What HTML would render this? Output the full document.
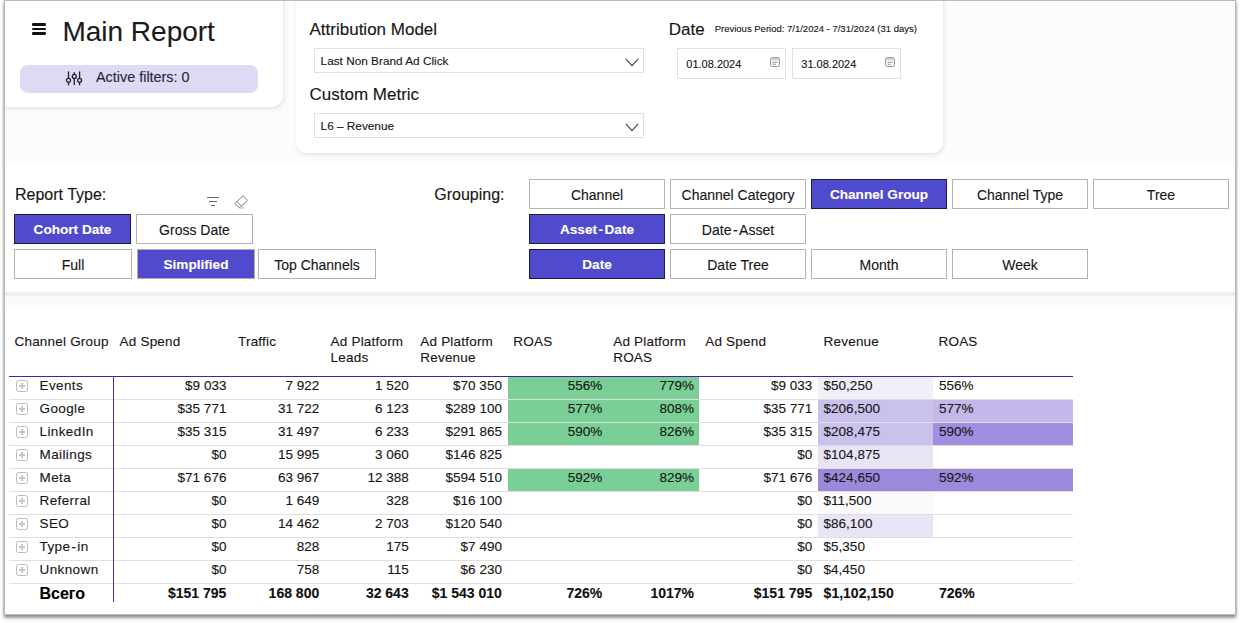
<!DOCTYPE html>
<html><head><meta charset="utf-8">
<style>
*{box-sizing:border-box}
html,body{margin:0;padding:0}
body{width:1240px;height:623px;background:#fff;overflow:hidden;position:relative;font-family:"Liberation Sans",sans-serif;color:#161616}
.a{position:absolute}
.t{position:absolute;white-space:nowrap;line-height:0;-webkit-text-stroke:.12px currentColor}
#page{position:absolute;left:4px;top:0;width:1232px;height:615px;background:#fff;border:1px solid #b9b9b9;box-shadow:0 0 3px rgba(0,0,0,.2),0 3px 3px rgba(0,0,0,.4)}
#clip{position:absolute;left:5px;top:1px;width:1230px;height:613px;overflow:hidden}
#in{position:absolute;left:-5px;top:-1px;width:1240px;height:623px}
.card{position:absolute;background:#fff;border-radius:11px;box-shadow:1px 2px 4px rgba(0,0,0,.10)}
.pill{position:absolute;background:#dcdbf3;border-radius:8px}
.btn{position:absolute;border:1px solid #b3b3b3;background:#fff;color:#161616;text-align:center}
.btn>span{position:absolute;left:0;right:0;line-height:0;white-space:nowrap;-webkit-text-stroke:.12px currentColor}
.on{background:#4f4bcc;border-color:#1e1e3c;color:#fff;font-weight:bold}
.exp{width:12px;height:12px;border:1px solid #bdbdbd;border-radius:2.5px}
.exp:before{content:"";position:absolute;left:2.1px;top:4.1px;width:5.7px;height:1.5px;background:#c8c8c8}
.exp:after{content:"";position:absolute;left:4.2px;top:2.1px;width:1.5px;height:5.5px;background:#c8c8c8}
</style></head><body>
<div id="page"></div>
<div id="clip"><div id="in">
<div class="a" style="left:0px;top:0px;width:1240px;height:165px;background:#fcfcfc"></div>
<div class="card" style="left:-20px;top:-20px;width:303px;height:127px"></div>
<div class="card" style="left:296px;top:-20px;width:647px;height:173px"></div>
<div class="a" style="left:31.5px;top:23.3px;width:14.8px;height:2.3px;background:#111;border-radius:1.2px"></div>
<div class="a" style="left:31.5px;top:27.9px;width:14.8px;height:2.3px;background:#111;border-radius:1.2px"></div>
<div class="a" style="left:31.5px;top:32.4px;width:14.8px;height:2.3px;background:#111;border-radius:1.2px"></div>
<div class="t" style="top:31.90px;font-size:28px;left:62.40px;color:#1b1b1b;">Main Report</div>
<div class="pill" style="left:20px;top:65px;width:238px;height:28px"></div>
<svg class="a" style="left:65px;top:71px" width="18" height="15" viewBox="0 0 18 15" fill="none" stroke="#1e1e30" stroke-width="1.3">
<line x1="3.5" y1="0.4" x2="3.5" y2="14.3"/><line x1="9.3" y1="1.2" x2="9.3" y2="14"/><line x1="14.6" y1="0.4" x2="14.6" y2="14.3"/>
<circle cx="3.5" cy="9.3" r="2" fill="#dcdbf3"/><circle cx="9.3" cy="5.4" r="2" fill="#dcdbf3"/><circle cx="14.6" cy="9.3" r="2" fill="#dcdbf3"/></svg>
<div class="t" style="top:77.01px;font-size:14.4px;left:96.00px;color:#252540;">Active filters: 0</div>
<div class="t" style="top:30.31px;font-size:17px;left:309.50px;">Attribution Model</div>
<div class="a" style="left:314px;top:48px;width:330px;height:25px;border:1px solid #e1e1e1;background:#fff"></div>
<div class="t" style="top:60.91px;font-size:11.8px;left:320.60px;">Last Non Brand Ad Click</div>
<svg class="a" style="left:624.5px;top:58.3px" width="14" height="9" viewBox="0 0 14 9" fill="none" stroke="#444" stroke-width="1.1"><polyline points="0.8,0.8 7,7.6 13.2,0.8"/></svg>
<div class="t" style="top:94.91px;font-size:17px;left:309.50px;">Custom Metric</div>
<div class="a" style="left:314px;top:113px;width:330px;height:25px;border:1px solid #e1e1e1;background:#fff"></div>
<div class="t" style="top:125.91px;font-size:11.8px;left:320.60px;">L6 – Revenue</div>
<svg class="a" style="left:624.5px;top:123.3px" width="14" height="9" viewBox="0 0 14 9" fill="none" stroke="#444" stroke-width="1.1"><polyline points="0.8,0.8 7,7.6 13.2,0.8"/></svg>
<div class="t" style="top:30.31px;font-size:17px;left:668.80px;">Date</div>
<div class="t" style="top:29.31px;font-size:9.5px;left:714.70px;">Previous Period: 7/1/2024 - 7/31/2024 (31 days)</div>
<div class="a" style="left:677px;top:48px;width:109px;height:31px;border:1px solid #e1e1e1;background:#fff"></div>
<div class="t" style="top:64.19px;font-size:11px;left:686.30px;">01.08.2024</div>
<svg class="a" style="left:770.3px;top:57px" width="10" height="10" viewBox="0 0 10 10" fill="none" stroke="#8a8a8a" stroke-width="0.9"><rect x="0.5" y="0.5" width="9" height="9" rx="1.8"/><rect x="0.9" y="0.9" width="8.2" height="2.4" fill="#cfcfcf" stroke="none"/><path d="M2.6 5.2h1.2M4.5 5.2h1.2M6.4 5.2h1.2M2.6 7.2h1.2M4.5 7.2h1.2" stroke="#5a5a90" stroke-width="1"/></svg>
<div class="a" style="left:792px;top:48px;width:109px;height:31px;border:1px solid #e1e1e1;background:#fff"></div>
<div class="t" style="top:64.19px;font-size:11px;left:801.30px;">31.08.2024</div>
<svg class="a" style="left:885.3px;top:57px" width="10" height="10" viewBox="0 0 10 10" fill="none" stroke="#8a8a8a" stroke-width="0.9"><rect x="0.5" y="0.5" width="9" height="9" rx="1.8"/><rect x="0.9" y="0.9" width="8.2" height="2.4" fill="#cfcfcf" stroke="none"/><path d="M2.6 5.2h1.2M4.5 5.2h1.2M6.4 5.2h1.2M2.6 7.2h1.2M4.5 7.2h1.2" stroke="#5a5a90" stroke-width="1"/></svg>
<div class="t" style="top:195.06px;font-size:16px;left:15.00px;">Report Type:</div>
<svg class="a" style="left:206px;top:195px" width="14" height="12" viewBox="0 0 14 12" fill="none" stroke="#666" stroke-width="1"><line x1="1" y1="2.5" x2="13" y2="2.5"/><line x1="3" y1="6.5" x2="11" y2="6.5"/><line x1="5" y1="10.5" x2="9" y2="10.5"/></svg>
<svg class="a" style="left:233px;top:194px" width="16" height="16" viewBox="0 0 16 16" fill="none" stroke="#777" stroke-width="1"><path d="M1.8 9.8 L9.9 1.7 L14.4 6.2 L6.7 13.9 Z" stroke-linejoin="round"/><line x1="4" y1="7.5" x2="8.3" y2="11.8"/><line x1="6.5" y1="14" x2="12" y2="14" stroke="#bbb"/></svg>
<div class="btn on" style="left:14px;top:214px;width:117px;height:30px"><span style="top:14.89px;font-size:13.6px">Cohort Date</span></div>
<div class="btn" style="left:136px;top:214px;width:117px;height:30px"><span style="top:14.75px;font-size:14px">Gross Date</span></div>
<div class="btn" style="left:14px;top:249px;width:118px;height:30px"><span style="top:14.75px;font-size:14px">Full</span></div>
<div class="btn on" style="border-color:#b5b0ac;left:137px;top:249px;width:118px;height:30px"><span style="top:14.89px;font-size:13.6px">Simplified</span></div>
<div class="btn" style="left:258px;top:249px;width:118px;height:30px"><span style="top:14.75px;font-size:14px">Top Channels</span></div>
<div class="t" style="top:195.26px;font-size:16px;left:434.30px;">Grouping:</div>
<div class="btn" style="left:529px;top:179px;width:136px;height:30px"><span style="top:14.75px;font-size:14px">Channel</span></div>
<div class="btn" style="left:670px;top:179px;width:136px;height:30px"><span style="top:14.75px;font-size:14px">Channel Category</span></div>
<div class="btn on" style="left:811px;top:179px;width:136px;height:30px"><span style="top:14.89px;font-size:13.6px">Channel Group</span></div>
<div class="btn" style="left:952px;top:179px;width:136px;height:30px"><span style="top:14.75px;font-size:14px">Channel Type</span></div>
<div class="btn" style="left:1093px;top:179px;width:136px;height:30px"><span style="top:14.75px;font-size:14px">Tree</span></div>
<div class="btn on" style="left:529px;top:214px;width:136px;height:30px"><span style="top:14.89px;font-size:13.6px">Asset<span style='margin:0 1.5px'>-</span>Date</span></div>
<div class="btn" style="left:670px;top:214px;width:136px;height:30px"><span style="top:14.75px;font-size:14px">Date<span style='margin:0 1.5px'>-</span>Asset</span></div>
<div class="btn on" style="left:529px;top:249px;width:136px;height:30px"><span style="top:14.89px;font-size:13.6px">Date</span></div>
<div class="btn" style="left:670px;top:249px;width:136px;height:30px"><span style="top:14.75px;font-size:14px">Date Tree</span></div>
<div class="btn" style="left:811px;top:249px;width:136px;height:30px"><span style="top:14.75px;font-size:14px">Month</span></div>
<div class="btn" style="left:952px;top:249px;width:136px;height:30px"><span style="top:14.75px;font-size:14px">Week</span></div>
<div class="a" style="left:0px;top:291px;width:1240px;height:15px;background:linear-gradient(#fff 0px,#f3f3f3 1.5px,#e9e9e9 3px,#f3f3f3 4.5px,#fafafa 6px,#fbfbfb 15px)"></div>
<div class="t" style="top:341.72px;font-size:13.5px;left:14.50px;letter-spacing:.2px">Channel Group</div>
<div class="t" style="top:341.72px;font-size:13.5px;left:119.60px;letter-spacing:.2px">Ad Spend</div>
<div class="t" style="top:341.72px;font-size:13.5px;left:238.00px;letter-spacing:.2px">Traffic</div>
<div class="t" style="top:341.72px;font-size:13.5px;left:330.60px;letter-spacing:.2px">Ad Platform</div>
<div class="t" style="top:357.72px;font-size:13.5px;left:330.60px;letter-spacing:.2px">Leads</div>
<div class="t" style="top:341.72px;font-size:13.5px;left:420.30px;letter-spacing:.2px">Ad Platform</div>
<div class="t" style="top:357.72px;font-size:13.5px;left:420.30px;letter-spacing:.2px">Revenue</div>
<div class="t" style="top:341.72px;font-size:13.5px;left:513.30px;letter-spacing:.2px">ROAS</div>
<div class="t" style="top:341.72px;font-size:13.5px;left:613.20px;letter-spacing:.2px">Ad Platform</div>
<div class="t" style="top:357.72px;font-size:13.5px;left:613.20px;letter-spacing:.2px">ROAS</div>
<div class="t" style="top:341.72px;font-size:13.5px;left:705.20px;letter-spacing:.2px">Ad Spend</div>
<div class="t" style="top:341.72px;font-size:13.5px;left:823.60px;letter-spacing:.2px">Revenue</div>
<div class="t" style="top:341.72px;font-size:13.5px;left:938.50px;letter-spacing:.2px">ROAS</div>
<div class="a" style="left:508px;top:377px;width:191px;height:22px;background:#79cf95"></div>
<div class="a" style="left:818px;top:377px;width:115px;height:22px;background:#f1eff9"></div>
<div class="a" style="left:508px;top:400px;width:191px;height:22px;background:#79cf95"></div>
<div class="a" style="left:818px;top:400px;width:115px;height:22px;background:#cac1ec"></div>
<div class="a" style="left:933px;top:400px;width:140px;height:22px;background:#c4b7ea"></div>
<div class="a" style="left:508px;top:423px;width:191px;height:22px;background:#79cf95"></div>
<div class="a" style="left:818px;top:423px;width:115px;height:22px;background:#cac1ec"></div>
<div class="a" style="left:933px;top:423px;width:140px;height:22px;background:#a08ee0"></div>
<div class="a" style="left:818px;top:446px;width:115px;height:22px;background:#e8e4f6"></div>
<div class="a" style="left:508px;top:469px;width:191px;height:22px;background:#79cf95"></div>
<div class="a" style="left:818px;top:469px;width:115px;height:22px;background:#9d89dc"></div>
<div class="a" style="left:933px;top:469px;width:140px;height:22px;background:#9d89dc"></div>
<div class="a" style="left:818px;top:492px;width:115px;height:22px;background:#faf9fc"></div>
<div class="a" style="left:818px;top:515px;width:115px;height:22px;background:#e9e5f6"></div>
<div class="a" style="left:9px;top:399px;width:1064px;height:1px;background:#dedede"></div>
<div class="a" style="left:9px;top:422px;width:1064px;height:1px;background:#dedede"></div>
<div class="a" style="left:9px;top:445px;width:1064px;height:1px;background:#dedede"></div>
<div class="a" style="left:9px;top:468px;width:1064px;height:1px;background:#dedede"></div>
<div class="a" style="left:9px;top:491px;width:1064px;height:1px;background:#dedede"></div>
<div class="a" style="left:9px;top:514px;width:1064px;height:1px;background:#dedede"></div>
<div class="a" style="left:9px;top:537px;width:1064px;height:1px;background:#dedede"></div>
<div class="a" style="left:9px;top:560px;width:1064px;height:1px;background:#dedede"></div>
<div class="a" style="left:9px;top:583px;width:1064px;height:1px;background:#dedede"></div>
<div class="a" style="left:9px;top:376px;width:1064px;height:1px;background:#4420b0"></div>
<div class="a" style="left:113px;top:377px;width:1px;height:225px;background:#4a2ab8"></div>
<div class="a exp" style="left:16px;top:380px"></div>
<div class="t" style="top:386.42px;font-size:13.5px;left:39.50px;letter-spacing:.4px">Events</div>
<div class="t" style="top:386.42px;font-size:13.5px;right:1013.60px;">$9 033</div>
<div class="t" style="top:386.42px;font-size:13.5px;right:920.80px;">7 922</div>
<div class="t" style="top:386.42px;font-size:13.5px;right:831.30px;">1 520</div>
<div class="t" style="top:386.42px;font-size:13.5px;right:738.10px;">$70 350</div>
<div class="t" style="top:386.42px;font-size:13.5px;right:637.70px;">556%</div>
<div class="t" style="top:386.42px;font-size:13.5px;right:546.00px;">779%</div>
<div class="t" style="top:386.42px;font-size:13.5px;right:427.80px;">$9 033</div>
<div class="t" style="top:386.42px;font-size:13.5px;left:823.60px;">$50,250</div>
<div class="t" style="top:386.42px;font-size:13.5px;left:939.00px;">556%</div>
<div class="a exp" style="left:16px;top:403px"></div>
<div class="t" style="top:409.42px;font-size:13.5px;left:39.50px;letter-spacing:.4px">Google</div>
<div class="t" style="top:409.42px;font-size:13.5px;right:1013.60px;">$35 771</div>
<div class="t" style="top:409.42px;font-size:13.5px;right:920.80px;">31 722</div>
<div class="t" style="top:409.42px;font-size:13.5px;right:831.30px;">6 123</div>
<div class="t" style="top:409.42px;font-size:13.5px;right:738.10px;">$289 100</div>
<div class="t" style="top:409.42px;font-size:13.5px;right:637.70px;">577%</div>
<div class="t" style="top:409.42px;font-size:13.5px;right:546.00px;">808%</div>
<div class="t" style="top:409.42px;font-size:13.5px;right:427.80px;">$35 771</div>
<div class="t" style="top:409.42px;font-size:13.5px;left:823.60px;">$206,500</div>
<div class="t" style="top:409.42px;font-size:13.5px;left:939.00px;">577%</div>
<div class="a exp" style="left:16px;top:426px"></div>
<div class="t" style="top:432.42px;font-size:13.5px;left:39.50px;letter-spacing:.4px">LinkedIn</div>
<div class="t" style="top:432.42px;font-size:13.5px;right:1013.60px;">$35 315</div>
<div class="t" style="top:432.42px;font-size:13.5px;right:920.80px;">31 497</div>
<div class="t" style="top:432.42px;font-size:13.5px;right:831.30px;">6 233</div>
<div class="t" style="top:432.42px;font-size:13.5px;right:738.10px;">$291 865</div>
<div class="t" style="top:432.42px;font-size:13.5px;right:637.70px;">590%</div>
<div class="t" style="top:432.42px;font-size:13.5px;right:546.00px;">826%</div>
<div class="t" style="top:432.42px;font-size:13.5px;right:427.80px;">$35 315</div>
<div class="t" style="top:432.42px;font-size:13.5px;left:823.60px;">$208,475</div>
<div class="t" style="top:432.42px;font-size:13.5px;left:939.00px;">590%</div>
<div class="a exp" style="left:16px;top:449px"></div>
<div class="t" style="top:455.42px;font-size:13.5px;left:39.50px;letter-spacing:.4px">Mailings</div>
<div class="t" style="top:455.42px;font-size:13.5px;right:1013.60px;">$0</div>
<div class="t" style="top:455.42px;font-size:13.5px;right:920.80px;">15 995</div>
<div class="t" style="top:455.42px;font-size:13.5px;right:831.30px;">3 060</div>
<div class="t" style="top:455.42px;font-size:13.5px;right:738.10px;">$146 825</div>
<div class="t" style="top:455.42px;font-size:13.5px;right:427.80px;">$0</div>
<div class="t" style="top:455.42px;font-size:13.5px;left:823.60px;">$104,875</div>
<div class="a exp" style="left:16px;top:472px"></div>
<div class="t" style="top:478.42px;font-size:13.5px;left:39.50px;letter-spacing:.4px">Meta</div>
<div class="t" style="top:478.42px;font-size:13.5px;right:1013.60px;">$71 676</div>
<div class="t" style="top:478.42px;font-size:13.5px;right:920.80px;">63 967</div>
<div class="t" style="top:478.42px;font-size:13.5px;right:831.30px;">12 388</div>
<div class="t" style="top:478.42px;font-size:13.5px;right:738.10px;">$594 510</div>
<div class="t" style="top:478.42px;font-size:13.5px;right:637.70px;">592%</div>
<div class="t" style="top:478.42px;font-size:13.5px;right:546.00px;">829%</div>
<div class="t" style="top:478.42px;font-size:13.5px;right:427.80px;">$71 676</div>
<div class="t" style="top:478.42px;font-size:13.5px;left:823.60px;">$424,650</div>
<div class="t" style="top:478.42px;font-size:13.5px;left:939.00px;">592%</div>
<div class="a exp" style="left:16px;top:495px"></div>
<div class="t" style="top:501.42px;font-size:13.5px;left:39.50px;letter-spacing:.4px">Referral</div>
<div class="t" style="top:501.42px;font-size:13.5px;right:1013.60px;">$0</div>
<div class="t" style="top:501.42px;font-size:13.5px;right:920.80px;">1 649</div>
<div class="t" style="top:501.42px;font-size:13.5px;right:831.30px;">328</div>
<div class="t" style="top:501.42px;font-size:13.5px;right:738.10px;">$16 100</div>
<div class="t" style="top:501.42px;font-size:13.5px;right:427.80px;">$0</div>
<div class="t" style="top:501.42px;font-size:13.5px;left:823.60px;">$11,500</div>
<div class="a exp" style="left:16px;top:518px"></div>
<div class="t" style="top:524.42px;font-size:13.5px;left:39.50px;letter-spacing:.4px">SEO</div>
<div class="t" style="top:524.42px;font-size:13.5px;right:1013.60px;">$0</div>
<div class="t" style="top:524.42px;font-size:13.5px;right:920.80px;">14 462</div>
<div class="t" style="top:524.42px;font-size:13.5px;right:831.30px;">2 703</div>
<div class="t" style="top:524.42px;font-size:13.5px;right:738.10px;">$120 540</div>
<div class="t" style="top:524.42px;font-size:13.5px;right:427.80px;">$0</div>
<div class="t" style="top:524.42px;font-size:13.5px;left:823.60px;">$86,100</div>
<div class="a exp" style="left:16px;top:541px"></div>
<div class="t" style="top:547.42px;font-size:13.5px;left:39.50px;letter-spacing:.4px">Type<span style='margin:0 1px'>-</span>in</div>
<div class="t" style="top:547.42px;font-size:13.5px;right:1013.60px;">$0</div>
<div class="t" style="top:547.42px;font-size:13.5px;right:920.80px;">828</div>
<div class="t" style="top:547.42px;font-size:13.5px;right:831.30px;">175</div>
<div class="t" style="top:547.42px;font-size:13.5px;right:738.10px;">$7 490</div>
<div class="t" style="top:547.42px;font-size:13.5px;right:427.80px;">$0</div>
<div class="t" style="top:547.42px;font-size:13.5px;left:823.60px;">$5,350</div>
<div class="a exp" style="left:16px;top:564px"></div>
<div class="t" style="top:570.42px;font-size:13.5px;left:39.50px;letter-spacing:.4px">Unknown</div>
<div class="t" style="top:570.42px;font-size:13.5px;right:1013.60px;">$0</div>
<div class="t" style="top:570.42px;font-size:13.5px;right:920.80px;">758</div>
<div class="t" style="top:570.42px;font-size:13.5px;right:831.30px;">115</div>
<div class="t" style="top:570.42px;font-size:13.5px;right:738.10px;">$6 230</div>
<div class="t" style="top:570.42px;font-size:13.5px;right:427.80px;">$0</div>
<div class="t" style="top:570.42px;font-size:13.5px;left:823.60px;">$4,450</div>
<div class="t" style="top:593.66px;font-size:16px;left:39.50px;font-weight:bold;color:#000;">Всего</div>
<div class="t" style="top:593.35px;font-size:14px;right:1013.60px;font-weight:bold;color:#111;">$151 795</div>
<div class="t" style="top:593.35px;font-size:14px;right:920.80px;font-weight:bold;color:#111;">168 800</div>
<div class="t" style="top:593.35px;font-size:14px;right:831.30px;font-weight:bold;color:#111;">32 643</div>
<div class="t" style="top:593.35px;font-size:14px;right:738.10px;font-weight:bold;color:#111;">$1 543 010</div>
<div class="t" style="top:593.35px;font-size:14px;right:637.70px;font-weight:bold;color:#111;">726%</div>
<div class="t" style="top:593.35px;font-size:14px;right:546.00px;font-weight:bold;color:#111;">1017%</div>
<div class="t" style="top:593.35px;font-size:14px;right:427.80px;font-weight:bold;color:#111;">$151 795</div>
<div class="t" style="top:593.35px;font-size:14px;left:823.60px;font-weight:bold;color:#111;">$1,102,150</div>
<div class="t" style="top:593.35px;font-size:14px;left:939.00px;font-weight:bold;color:#111;">726%</div>
</div></div>
</body></html>
